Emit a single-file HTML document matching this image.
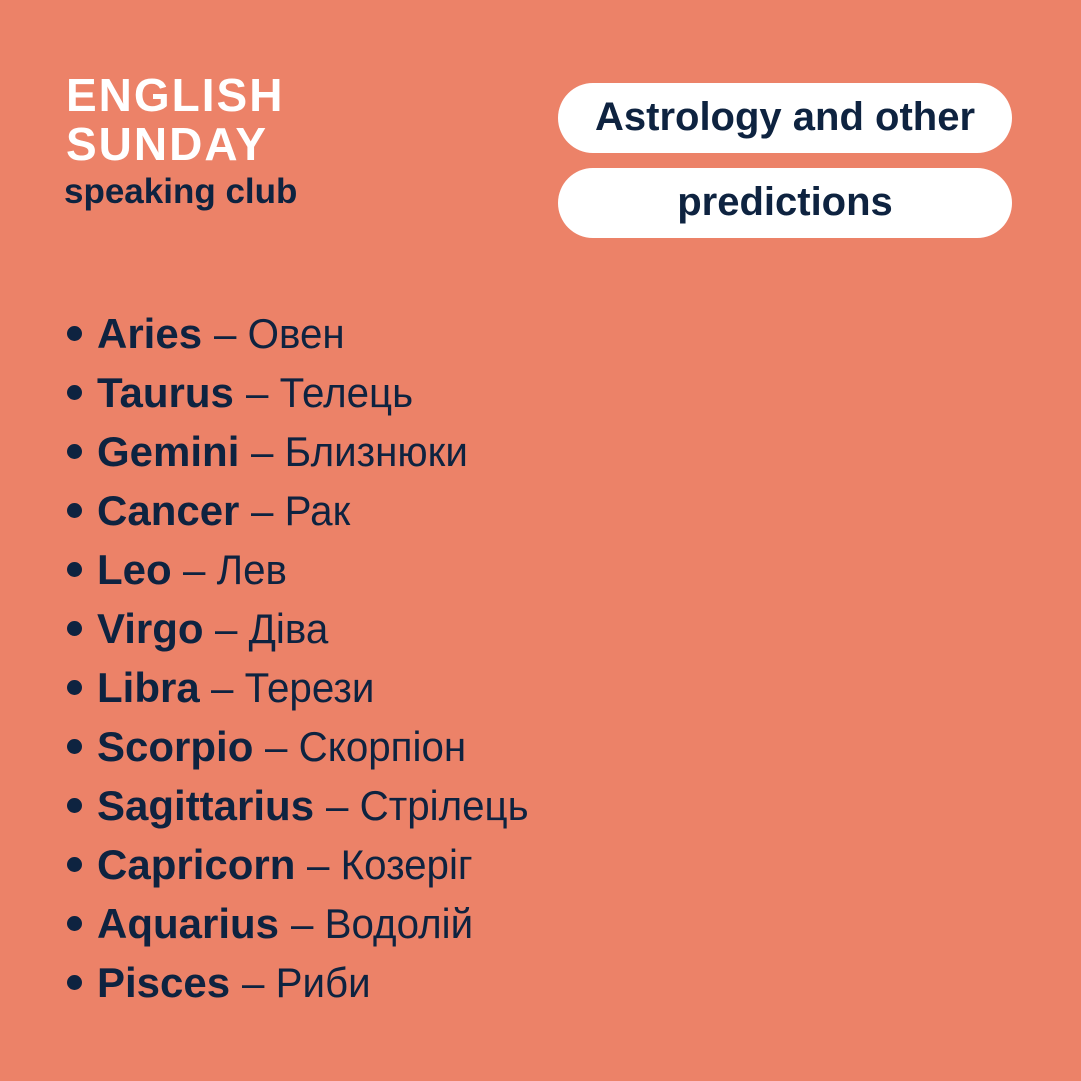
<!DOCTYPE html>
<html><head><meta charset="utf-8"><style>
html,body{margin:0;padding:0}
body{width:1081px;height:1081px;background:#EC8268;position:relative;overflow:hidden;font-family:"Liberation Sans",sans-serif;color:#0E2340}
.t{position:absolute;left:66px;color:#fff;font-weight:bold;font-size:46px;letter-spacing:2px;line-height:46px}
.sc{position:absolute;left:64px;top:172px;font-weight:bold;font-size:35px;white-space:nowrap}
.pill{position:absolute;left:558px;width:454px;height:70px;border-radius:35px;background:#fff;text-align:center;line-height:68px;font-weight:bold;font-size:40px}
.pill span{display:inline-block;white-space:nowrap}
.row{position:absolute;left:64px;font-size:42px;line-height:40px;white-space:nowrap}
.row b{font-weight:bold}
.row .ru{display:inline-block;transform:scaleX(0.96);transform-origin:left;font-weight:normal}
.dot{display:inline-block;width:15px;height:15px;border-radius:50%;background:#0E2340;margin:0 15px 6px 3px;vertical-align:middle}
</style></head><body>
<div class="t" style="top:72px">ENGLISH</div>
<div class="t" style="top:121px">SUNDAY</div>
<div class="sc">speaking club</div>
<div class="pill" style="top:83px"><span>Astrology and other</span></div>
<div class="pill" style="top:168px"><span>predictions</span></div>
<div class="row" style="top:314px"><span class="dot"></span><b>Aries</b> <span class="ru">– Овен</span></div>
<div class="row" style="top:373px"><span class="dot"></span><b>Taurus</b> <span class="ru">– Телець</span></div>
<div class="row" style="top:432px"><span class="dot"></span><b>Gemini</b> <span class="ru">– Близнюки</span></div>
<div class="row" style="top:491px"><span class="dot"></span><b>Cancer</b> <span class="ru">– Рак</span></div>
<div class="row" style="top:550px"><span class="dot"></span><b>Leo</b> <span class="ru">– Лев</span></div>
<div class="row" style="top:609px"><span class="dot"></span><b>Virgo</b> <span class="ru">– Діва</span></div>
<div class="row" style="top:668px"><span class="dot"></span><b>Libra</b> <span class="ru">– Терези</span></div>
<div class="row" style="top:727px"><span class="dot"></span><b>Scorpio</b> <span class="ru">– Скорпіон</span></div>
<div class="row" style="top:786px"><span class="dot"></span><b>Sagittarius</b> <span class="ru">– Стрілець</span></div>
<div class="row" style="top:845px"><span class="dot"></span><b>Capricorn</b> <span class="ru">– Козеріг</span></div>
<div class="row" style="top:904px"><span class="dot"></span><b>Aquarius</b> <span class="ru">– Водолій</span></div>
<div class="row" style="top:963px"><span class="dot"></span><b>Pisces</b> <span class="ru">– Риби</span></div>
</body></html>
